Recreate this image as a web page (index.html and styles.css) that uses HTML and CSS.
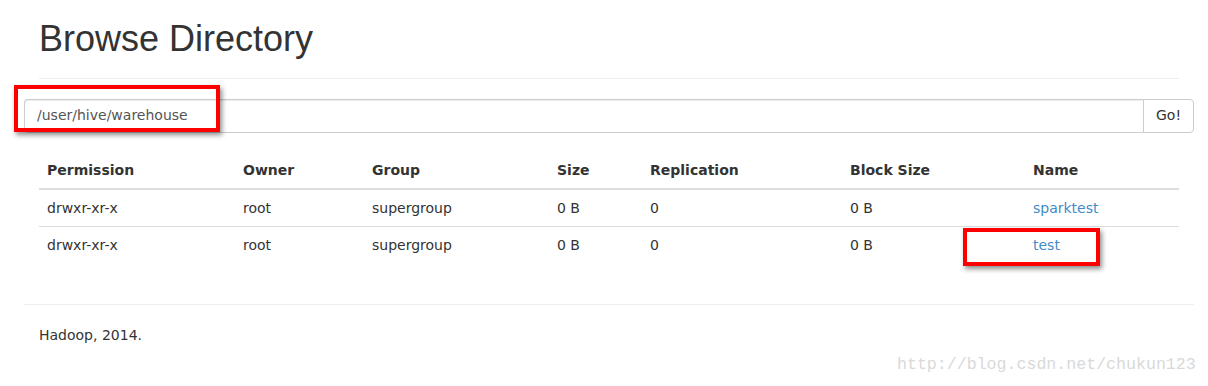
FILE: index.html
```html
<!DOCTYPE html>
<html>
<head>
<meta charset="utf-8">
<title>Browsing HDFS</title>
<link rel="stylesheet" href="styles.css">
</head>
<body>
<div class="container">
  <div class="page-header">
    <h1>Browse Directory</h1>
  </div>
  <div class="input-group">
    <input class="form-control" type="text" value="/user/hive/warehouse">
    <button class="btn-go">Go!</button>
    <div class="mark mark-path"></div>
  </div>
  <div class="table-wrap">
    <table class="listing">
      <colgroup>
        <col class="c1"><col class="c2"><col class="c3"><col class="c4"><col class="c5"><col class="c6"><col class="c7">
      </colgroup>
      <thead>
        <tr><th>Permission</th><th>Owner</th><th>Group</th><th>Size</th><th>Replication</th><th>Block Size</th><th>Name</th></tr>
      </thead>
      <tbody>
        <tr><td>drwxr-xr-x</td><td>root</td><td>supergroup</td><td>0 B</td><td>0</td><td>0 B</td><td><a href="#">sparktest</a></td></tr>
        <tr><td>drwxr-xr-x</td><td>root</td><td>supergroup</td><td>0 B</td><td>0</td><td>0 B</td><td class="name-cell"><a href="#">test</a><span class="mark mark-test"></span></td></tr>
      </tbody>
    </table>
  </div>
  <hr class="footer-rule">
  <p class="footer">Hadoop, 2014.</p>
</div>
<div class="watermark">http://blog.csdn.net/chukun123</div>
</body>
</html>
```

FILE: styles.css
```css
html, body {
  margin: 0;
  padding: 0;
  background: #fff;
}
body {
  font-family: "DejaVu Sans", sans-serif;
  font-size: 14px;
  line-height: 20px;
  color: #333;
  position: relative;
  height: 386px;
  overflow: hidden;
}
.container {
  width: 1170px;
  margin-left: 24px;
}
.page-header {
  margin: 0 15px 20px;
  padding-bottom: 9px;
  border-bottom: 1px solid #eee;
}
.page-header h1 {
  margin: 19px 0 10px;
  font-family: "Liberation Sans", Arial, sans-serif;
  font-weight: 500;
  font-size: 36px;
  line-height: 1.1;
  color: #333;
}
.input-group {
  display: flex;
  position: relative;
  height: 34px;
}
.form-control {
  flex: 1;
  box-sizing: border-box;
  height: 34px;
  margin: 0;
  padding: 5px 12px 7px;
  font-family: "DejaVu Sans", sans-serif;
  font-size: 14px;
  color: #555;
  border: 1px solid #ccc;
  border-right: none;
  border-radius: 4px 0 0 4px;
  box-shadow: inset 0 1px 1px rgba(0,0,0,.075);
  outline: none;
}
.btn-go {
  box-sizing: border-box;
  height: 34px;
  margin: 0;
  padding: 5px 12px 7px;
  font-family: "DejaVu Sans", sans-serif;
  font-size: 14px;
  color: #333;
  background: #fff;
  border: 1px solid #ccc;
  border-radius: 0 4px 4px 0;
}
.mark {
  position: absolute;
  box-sizing: border-box;
  border: 4px solid #f00;
  box-shadow: 2px 3px 5px rgba(0,0,0,.45);
  pointer-events: none;
}
.mark-path {
  left: -10px;
  top: -14px;
  width: 206px;
  height: 47px;
}
.table-wrap {
  margin: 19px 15px 0;
}
.listing {
  width: 1140px;
  border-collapse: collapse;
  border-spacing: 0;
  table-layout: fixed;
}
.c1 { width: 196px; }
.c2 { width: 129px; }
.c3 { width: 185px; }
.c4 { width: 93px; }
.c5 { width: 200px; }
.c6 { width: 183px; }
.c7 { width: 154px; }
.listing th {
  text-align: left;
  font-weight: bold;
  padding: 8px;
  line-height: 20px;
  border-bottom: 2px solid #ddd;
}
.listing td {
  padding: 8px;
  line-height: 20px;
  border-top: 1px solid #ddd;
}
.listing thead + tbody tr:first-child td {
  border-top: none;
}
.listing a {
  color: #428bca;
  text-decoration: none;
}
.name-cell {
  position: relative;
}
.mark-test {
  left: -62px;
  top: 1px;
  width: 137px;
  height: 38px;
}
.footer-rule {
  margin: 41px 0 20px;
  border: 0;
  border-top: 1px solid #eee;
}
.footer {
  margin: 0 15px;
}
.watermark {
  position: absolute;
  left: 897px;
  top: 355px;
  font-family: "Liberation Mono", monospace;
  font-size: 16.6px;
  line-height: 20px;
  color: #d9d9d9;
  white-space: nowrap;
}
```
